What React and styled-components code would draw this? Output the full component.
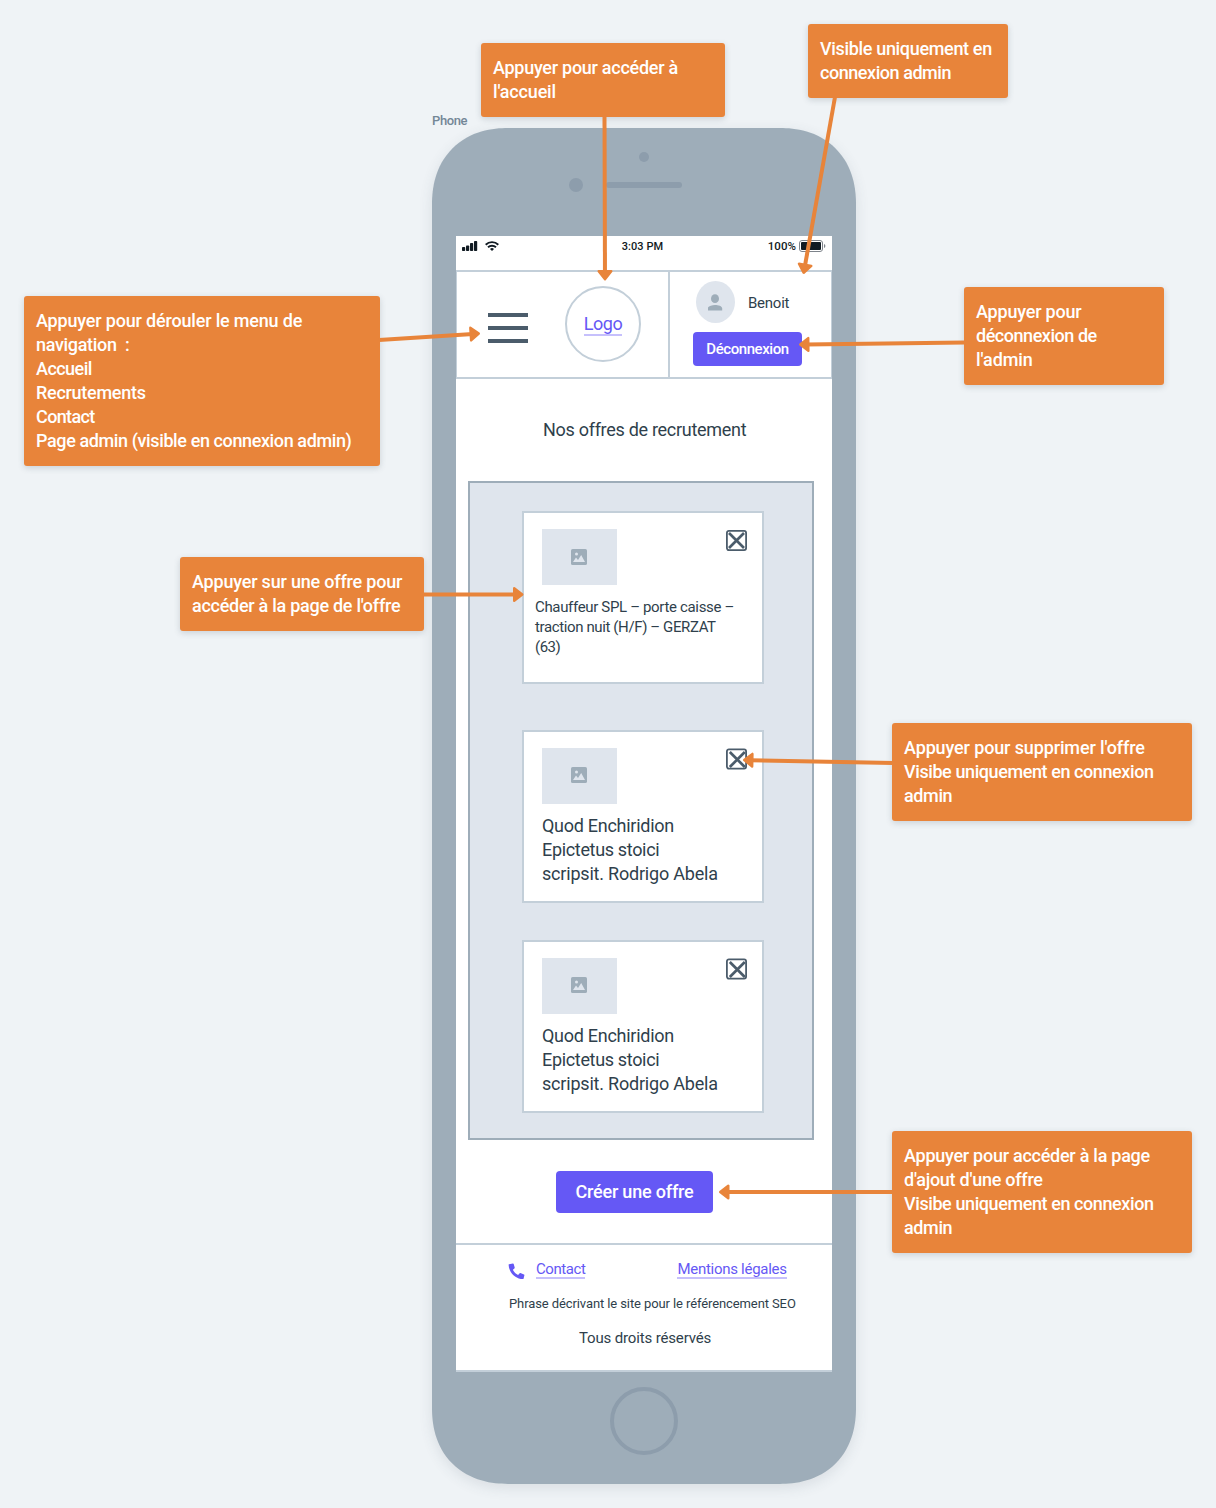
import React from "react";
import styled, { createGlobalStyle } from "styled-components";

const c = {
  page: "#eff3f6",
  shell: "#9eadb9",
  shellDark: "#8d9dac",
  orange: "#e8843a",
  purple: "#6558f5",
  purpleSoft: "#c6c0fc",
  line: "#c3cfd9",
  fill: "#dfe5ed",
  ink: "#2f3f4c",
  slate: "#4b5c6b",
};

const Global = createGlobalStyle`
  * { box-sizing: border-box; }
  body { margin: 0; background: ${c.page}; }
`;

const Canvas = styled.main`
  position: relative;
  width: 1216px;
  height: 1508px;
  overflow: hidden;
  background: ${c.page};
  font-family: Roboto, "Liberation Sans", sans-serif;
  color: ${c.ink};
`;

const T = styled.span`
  display: block;
  width: max-content;
  white-space: pre;
  font-size: ${(p) => p.$size || 18}px;
  line-height: ${(p) => p.$lh || 24}px;
  font-weight: ${(p) => p.$weight || 400};
  letter-spacing: ${(p) => p.$ls || 0}px;
  margin: ${(p) => p.$m || 0};
`;

const Note = styled.aside`
  position: absolute;
  left: ${(p) => p.$x}px;
  top: ${(p) => p.$y}px;
  width: ${(p) => p.$w}px;
  padding: 13px 12px 13px;
  border-radius: 3px;
  background: ${c.orange};
  color: #fff;
  box-shadow: 0 2px 6px rgba(60, 75, 90, 0.2);
`;

const Arrows = styled.svg`
  position: absolute;
  inset: 0;
  pointer-events: none;
`;

const PhoneLabel = styled.div`
  position: absolute;
  left: 432px;
  top: 113px;
  color: #748796;
`;

const Phone = styled.section`
  position: absolute;
  left: 432px;
  top: 128px;
  width: 424px;
  height: 1356px;
  padding: 0 24px;
  display: flex;
  flex-direction: column;
  background: ${c.shell};
  border-radius: 76px;
  corner-shape: superellipse(1.15);
  box-shadow: 0 4px 14px rgba(60, 75, 90, 0.12);
`;

const Top = styled.div`
  height: 108px;
  padding-top: 24px;
  display: flex;
  flex-direction: column;
  align-items: center;
  gap: 16px;
`;

const Dot = styled.i`
  width: ${(p) => p.$d}px;
  height: ${(p) => p.$d}px;
  border-radius: 50%;
  background: ${c.shellDark};
`;

const SpeakerRow = styled.div`
  display: flex;
  align-items: center;
  width: 150px;
  gap: 23px;
`;

const Speaker = styled.i`
  width: 76px;
  height: 6px;
  border-radius: 3px;
  background: ${c.shellDark};
`;

const Screen = styled.div`
  height: 1136px;
  background: #fff;
  border-bottom: 2px solid ${c.line};
  display: flex;
  flex-direction: column;
`;

const Home = styled.div`
  width: 68px;
  height: 68px;
  margin: 15px auto 0;
  border: 4px solid ${c.shellDark};
  border-radius: 50%;
`;

const Status = styled.div`
  height: 34px;
  padding: 3px 6px 0 6px;
  display: grid;
  grid-template-columns: 1fr auto 1fr;
  align-items: start;
  color: #101a22;
`;

const StatusSide = styled.div`
  display: flex;
  align-items: center;
  height: 14px;
  gap: ${(p) => p.$gap}px;
  justify-content: ${(p) => (p.$end ? "flex-end" : "flex-start")};
`;

const Header = styled.header`
  height: 109px;
  display: flex;
  border: 2px solid ${c.line};
  border-left-width: 1px;
  border-right-width: 1px;
`;

const HeaderMain = styled.div`
  width: 211px;
  padding: 14px 0 0 31px;
  display: flex;
  gap: 37px;
`;

const Burger = styled.div`
  width: 40px;
  margin-top: 26.5px;
  display: flex;
  flex-direction: column;
  gap: 9px;
`;

const Bar = styled.i`
  height: 4px;
  background: ${c.slate};
`;

const Logo = styled.div`
  width: 76px;
  height: 76px;
  border: 2px solid ${c.line};
  border-radius: 50%;
  display: flex;
  align-items: center;
  justify-content: center;
`;

const Link = styled.a`
  color: ${c.purple};
  border-bottom: 2px solid ${c.purpleSoft};
`;

const Account = styled.div`
  flex: 1;
  border-left: 2px solid ${c.line};
  padding: 9px 0 0 23px;
`;

const User = styled.div`
  display: flex;
  align-items: center;
  gap: 13px;
  padding-left: 3px;
`;

const Avatar = styled.div`
  width: 39px;
  height: 42px;
  border-radius: 50%;
  background: ${c.fill};
  display: flex;
  align-items: center;
  justify-content: center;
`;

const Button = styled.button`
  width: ${(p) => p.$w}px;
  height: ${(p) => p.$h}px;
  margin: ${(p) => p.$m || 0};
  padding: 0;
  border: 0;
  border-radius: 4px;
  background: ${c.purple};
  color: #fff;
  font-family: inherit;
  display: flex;
  align-items: center;
  justify-content: center;
`;

const Title = styled.h1`
  margin: 39px 0 39px 87px;
`;

const List = styled.div`
  width: 346px;
  height: 659px;
  margin-left: 12px;
  padding: 28px 0 0 52px;
  border: 2px solid ${c.shell};
  background: ${c.fill};
`;

const Card = styled.article`
  width: 242px;
  height: 173px;
  margin-bottom: ${(p) => p.$mb || 0}px;
  padding: 16px 15px 0 18px;
  border: 2px solid ${c.line};
  background: #fff;
`;

const CardTop = styled.div`
  display: flex;
  justify-content: space-between;
  align-items: flex-start;
`;

const Thumb = styled.div`
  width: 75px;
  height: 56px;
  padding: 0 1px ${(p) => (p.$raised ? 2 : 0)}px 0;
  background: ${c.fill};
  display: flex;
  align-items: center;
  justify-content: center;
`;

const CardText = styled.div`
  margin: ${(p) => (p.$small ? "12px 0 0 -7px" : "10px 0 0")};
`;

const Footer = styled.footer`
  flex: 1;
  margin-top: 30px;
  border-top: 2px solid ${c.line};
  padding: 14px 0 0;
  display: flex;
  flex-direction: column;
`;

const Links = styled.nav`
  display: flex;
  align-items: flex-start;
  height: 20px;
  padding-left: 52px;
`;

const PhoneIcon = styled.svg`
  margin: 4px 11px 0 0;
`;

const Gap = styled.div`
  width: 92px;
`;

const FootLine = styled.div`
  margin: ${(p) => p.$m};
`;

const Signal = () => (
  <svg width="16" height="12" viewBox="0 0 16 12" fill="currentColor">
    <rect x="0" y="7" width="3.2" height="4" rx=".8" />
    <rect x="4" y="5.5" width="3.2" height="5.5" rx=".8" />
    <rect x="8" y="3" width="3.2" height="8" rx=".8" />
    <rect x="12" y="1" width="3.2" height="10" rx=".8" />
  </svg>
);

const Wifi = () => (
  <svg width="14" height="12" viewBox="0 0 14 12" fill="none" stroke="currentColor" strokeWidth="1.9">
    <path d="M.7 4.7a9 9 0 0 1 12.6 0M3 7.3a5.8 5.8 0 0 1 8 0" />
    <path d="M5 9a3 3 0 0 1 4 0L7 11z" fill="currentColor" stroke="none" />
  </svg>
);

const Battery = () => (
  <svg width="27" height="12" viewBox="0 0 27 12">
    <rect x=".5" y=".5" width="23" height="11" rx="2.5" fill="none" stroke="#7d838a" />
    <rect x="2" y="2" width="20" height="8" rx="1" fill="#101a22" />
    <path d="M25 4v4q1.4-.6 1.4-2T25 4" fill="#7d838a" />
  </svg>
);

const Person = () => (
  <svg width="15" height="17" viewBox="0 0 15 17" fill={c.shell}>
    <ellipse cx="7" cy="4.7" rx="4" ry="4.4" />
    <path d="M-.2 16.5v-2c0-2.4 4-3.5 7.2-3.5s7.2 1.1 7.2 3.5v2z" />
  </svg>
);

const Picture = () => (
  <svg width="16" height="16" viewBox="0 0 16 16">
    <rect width="16" height="16" rx="1.6" fill={c.shell} />
    <circle cx="5.5" cy="4.9" r="1.5" fill={c.fill} />
    <path d="M2 13l3-4.5 2 2.6L10.2 6 14 13z" fill={c.fill} />
  </svg>
);

const Close = ({ shift }) => (
  <svg width="22" height="23" viewBox="0 0 22 23" fill="none" stroke={c.slate}>
    <rect x="1.9" y={shift ? 1.4 : 1.9} width="19.2" height="19.2" rx="2" strokeWidth="1.8" />
    <path d={shift ? "M4.8 4l15 15M19.8 4l-15 15" : "M4 4l15 15M19 4L4 19"} strokeWidth="2.7" />
  </svg>
);

const Arrow = ({ from, to }) => {
  const dx = to[0] - from[0];
  const dy = to[1] - from[1];
  const len = Math.hypot(dx, dy);
  const angle = (Math.atan2(dy, dx) * 180) / Math.PI;
  return (
    <g transform={`translate(${from[0]} ${from[1]}) rotate(${angle})`}>
      <path d={`M0 0H${len - 7}`} stroke={c.orange} strokeWidth="4" />
      <path
        d={`M${len - 9.3} -6.3L${len - 1.2} 0L${len - 9.3} 6.3z`}
        fill={c.orange}
        stroke={c.orange}
        strokeWidth="2.4"
        strokeLinejoin="round"
      />
    </g>
  );
};

const notes = [
  { x: 481, y: 43, w: 244, lines: [["Appuyer pour accéder à", -0.27], ["l'accueil", -0.17]] },
  { x: 808, y: 24, w: 200, lines: [["Visible uniquement en", -0.33], ["connexion admin", -0.45]] },
  {
    x: 24, y: 296, w: 356,
    lines: [
      ["Appuyer pour dérouler le menu de", -0.18],
      ["navigation  :", -0.32],
      ["Accueil", -0.55],
      ["Recrutements", -0.28],
      ["Contact", -0.62],
      ["Page admin (visible en connexion admin)", -0.39],
    ],
  },
  { x: 964, y: 287, w: 200, lines: [["Appuyer pour", -0.2], ["déconnexion de", -0.46], ["l'admin", -0.08]] },
  { x: 180, y: 557, w: 244, lines: [["Appuyer sur une offre pour", -0.2], ["accéder à la page de l'offre", -0.27]] },
  { x: 892, y: 723, w: 300, lines: [["Appuyer pour supprimer l'offre", -0.13], ["Visibe uniquement en connexion", -0.41], ["admin", -0.38]] },
  {
    x: 892, y: 1131, w: 300,
    lines: [["Appuyer pour accéder à la page", -0.26], ["d'ajout d'une offre", -0.26], ["Visibe uniquement en connexion", -0.41], ["admin", -0.38]],
  },
];

const arrows = [
  [[604.5, 116], [605, 280.5]],
  [[835, 97], [803.5, 274]],
  [[379, 340], [480, 333.5]],
  [[965, 342.5], [799, 344.5]],
  [[423, 594.5], [523.5, 594.5]],
  [[893, 763], [743, 760]],
  [[893, 1192], [719, 1192]],
];

const latin = [["Quod Enchiridion", -0.27], ["Epictetus stoici", -0.33], ["scripsit. Rodrigo Abela", -0.2]];

const cards = [
  {
    small: true, mb: 46,
    lines: [["Chauffeur SPL – porte caisse –", -0.34], ["traction nuit (H/F) – GERZAT", -0.38], ["(63)", -0.5]],
  },
  { mb: 37, shift: true, lines: latin },
  { mb: 0, shift: true, lines: latin },
];

export default function App() {
  return (
    <Canvas>
      <Global />
      <PhoneLabel><T $size={13} $lh={16} $weight={500} $ls={-0.38}>Phone</T></PhoneLabel>
      <Phone>
        <Top>
          <Dot $d={10} />
          <SpeakerRow><Dot $d={14} /><Speaker /></SpeakerRow>
        </Top>
        <Screen>
          <Status>
            <StatusSide $gap={7}><Signal /><Wifi /></StatusSide>
            <T $size={11} $lh={16} $weight={500} $ls={0.05} $m="0 3px 0 0">3:03 PM</T>
            <StatusSide $gap={3} $end>
              <T $size={11.5} $lh={15} $weight={500} $ls={0.05} $m="1px 0 0">100%</T>
              <Battery />
            </StatusSide>
          </Status>
          <Header>
            <HeaderMain>
              <Burger><Bar /><Bar /><Bar /></Burger>
              <Logo><Link><T $size={18} $lh={24} $ls={-0.5} $m="0 0 -2px">Logo</T></Link></Logo>
            </HeaderMain>
            <Account>
              <User>
                <Avatar><Person /></Avatar>
                <T $size={15} $lh={20} $ls={-0.25} $m="1px 0 0">Benoit</T>
              </User>
              <Button $w={109} $h={34} $m="9px 0 0"><T $size={15} $lh={20} $weight={500} $ls={-0.43}>Déconnexion</T></Button>
            </Account>
          </Header>
          <Title><T $ls={-0.29}>Nos offres de recrutement</T></Title>
          <List>
            {cards.map((card, i) => (
              <Card key={i} $mb={card.mb}>
                <CardTop>
                  <Thumb $raised={card.shift}><Picture /></Thumb>
                  <Close shift={card.shift} />
                </CardTop>
                <CardText $small={card.small}>
                  {card.lines.map(([text, ls]) => (
                    <T key={text} $size={card.small ? 15 : 18} $lh={card.small ? 20 : 24} $ls={ls}>{text}</T>
                  ))}
                </CardText>
              </Card>
            ))}
          </List>
          <Button $w={157} $h={42} $m="31px 0 0 100px"><T $weight={500} $ls={-0.2}>Créer une offre</T></Button>
          <Footer>
            <Links>
              <PhoneIcon width="17" height="17" viewBox="0 0 17 17" fill={c.purple}>
                <path d="M1 1.2L4.9.5Q5.5.4 5.7 1L6.7 4.6Q6.8 5.1 6.4 5.5L4.9 6.8C6 9 7.8 10.9 10.1 12L11.4 10.4Q11.8 9.9 12.4 10.1L16 11.5Q16.5 11.7 16.4 12.3L15.6 15.6Q15.5 16.1 15 16.1C7.5 16.1.9 9.5.6 1.8Q.6 1.3 1 1.2z" />
              </PhoneIcon>
              <Link><T $size={15} $lh={21} $ls={-0.43} $m="0 0 -3px">Contact</T></Link>
              <Gap />
              <Link><T $size={15} $lh={21} $ls={-0.28} $m="0 0 -3px">Mentions légales</T></Link>
            </Links>
            <FootLine $m="16px 0 0 53px"><T $size={13} $lh={18} $ls={-0.1}>Phrase décrivant le site pour le référencement SEO</T></FootLine>
            <FootLine $m="15px 0 0 123px"><T $size={15} $lh={20} $ls={-0.15}>Tous droits réservés</T></FootLine>
          </Footer>
        </Screen>
        <Home />
      </Phone>
      {notes.map((n, i) => (
        <Note key={i} $x={n.x} $y={n.y} $w={n.w}>
          {n.lines.map(([text, ls]) => <T key={text} $weight={500} $ls={ls}>{text}</T>)}
        </Note>
      ))}
      <Arrows width="1216" height="1508" viewBox="0 0 1216 1508">
        {arrows.map(([from, to], i) => <Arrow key={i} from={from} to={to} />)}
      </Arrows>
    </Canvas>
  );
}
